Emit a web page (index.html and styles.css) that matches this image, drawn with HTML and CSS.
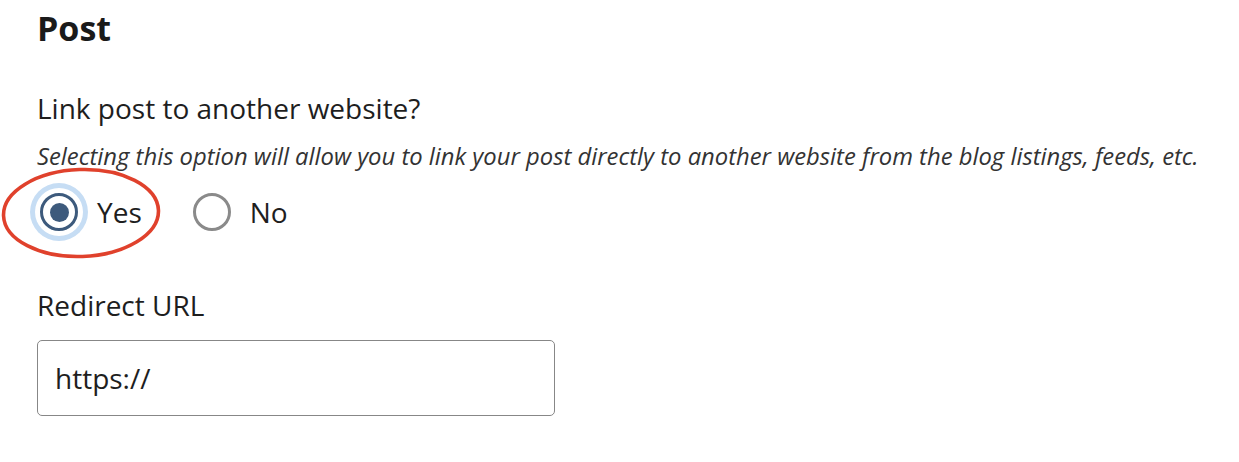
FILE: index.html
```html
<!DOCTYPE html>
<html lang="en">
<head>
<meta charset="utf-8">
<title>Post</title>
<link rel="stylesheet" href="styles.css">
</head>
<body>
<main class="form">
  <h2 class="title">Post</h2>
  <fieldset class="group">
    <legend class="label">Link post to another website?</legend>
    <p class="hint">Selecting this option will allow you to link your post directly to another website from the blog listings, feeds, etc.</p>
    <div class="radios">
      <label class="option option-yes">
        <span class="radio radio-checked"><span class="dot"></span></span>
        <span class="option-text">Yes</span>
        <svg class="marker" viewBox="0 0 164 96" width="164" height="96" aria-hidden="true">
          <ellipse cx="82" cy="48" rx="77.5" ry="43.5" transform="rotate(-2 82 48)" fill="none" stroke="#e0412c" stroke-width="3.6"/>
        </svg>
      </label>
      <label class="option">
        <span class="radio"></span>
        <span class="option-text">No</span>
      </label>
    </div>
  </fieldset>
  <div class="field">
    <label class="label label-url" for="url">Redirect URL</label>
    <div class="input" id="url">https://</div>
  </div>
</main>
</body>
</html>
```
FILE: styles.css
```css
* { box-sizing: border-box; }
html, body { margin: 0; padding: 0; background: #ffffff; }
body {
  font-family: "Open Sans", "Noto Sans", sans-serif;
  color: #1e1e1e;
}
.form {
  padding: 8px 0 0 37px;
}
.title {
  margin: 0;
  font-size: 34px;
  line-height: 40px;
  font-weight: 700;
  color: #1a1a1a;
}
.group {
  border: 0;
  margin: 42px 0 0 0;
  padding: 0;
  min-width: 0;
}
.label {
  display: block;
  padding: 0;
  font-size: 28px;
  line-height: 36px;
  color: #1e1e1e;
}
.hint {
  margin: 14px 0 0 0;
  font-size: 23.8px;
  line-height: 32px;
  font-style: italic;
  white-space: nowrap;
  color: #333333;
}
.radios {
  display: flex;
  align-items: center;
  gap: 48px;
  margin-top: 21px;
  height: 38px;
}
.option {
  position: relative;
  display: flex;
  align-items: center;
  gap: 19px;
  font-size: 28px;
  line-height: 38px;
}
.radio {
  flex: none;
  width: 38px;
  height: 38px;
  margin-left: 3px;
  border-radius: 50%;
  border: 3px solid #8a8a8a;
  display: flex;
  align-items: center;
  justify-content: center;
}
.radio-checked {
  border-color: #3d5a7c;
  box-shadow: 0 0 0 5px #ffffff, 0 0 0 10px #c6ddf4;
}
.dot {
  width: 19px;
  height: 19px;
  border-radius: 50%;
  background: #3d5a7c;
}
.marker {
  position: absolute;
  left: -38px;
  top: -28px;
  pointer-events: none;
}
.field {
  margin-top: 56px;
}
.label-url {
  margin: 0;
}
.input {
  margin-top: 17px;
  width: 518px;
  height: 76px;
  border: 1.5px solid #878787;
  border-radius: 5px;
  padding: 0 17px;
  display: flex;
  align-items: center;
  font-size: 28px;
  color: #1e1e1e;
}
```
